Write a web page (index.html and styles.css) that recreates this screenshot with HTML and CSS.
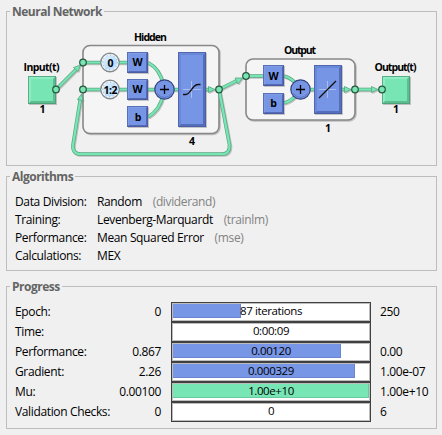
FILE: index.html
```html
<!DOCTYPE html>
<html lang="en">
<head>
<meta charset="utf-8">
<title>Neural Network Training</title>
<link rel="stylesheet" href="styles.css">
</head>
<body>
<main class="window">
  <section class="panel network">
    <h2 class="panel-title"><span class="title-text">Neural Network</span></h2>
    <svg class="diagram" viewBox="7 12 429 153" width="429" height="153">
      <defs>
        <linearGradient id="delay" x1="0" y1="0" x2="1" y2="1">
          <stop offset="0" stop-color="#fff"/><stop offset=".3" stop-color="#d4eaff"/><stop offset=".65" stop-color="#b4dcff"/><stop offset="1" stop-color="#f4faff"/>
        </linearGradient>
        <filter id="shadow" x="-10%" y="-10%" width="125%" height="125%">
          <feDropShadow dx="1" dy="1" stdDeviation=".7" flood-color="#777" flood-opacity=".4"/>
        </filter>
        <symbol id="block" viewBox="0 0 21 21" overflow="visible">
          <rect width="21" height="21" fill="#7695e5"/>
          <path d="M0 0H21L19 2H2V19L0 21Z" fill="#819ce4"/>
          <path d="M21 0V21H0L2 19H19V2Z" fill="#5269b5"/>
          <rect x=".5" y=".5" width="20" height="20" fill="none" stroke="#43579b" stroke-opacity=".65"/>
        </symbol>
        <symbol id="port" viewBox="-5 -5 10 10" overflow="visible">
          <circle r="3.3" fill="#78e6b4" stroke="#28583f" stroke-width="1.2"/>
        </symbol>
        <symbol id="sum" viewBox="-11 -11 22 22" overflow="visible">
          <circle r="9.7" fill="#7695e5" stroke="#33447f" stroke-width="1.2"/>
          <path d="M-7 4A8.3 8.3 0 0 0 7 4" fill="none" stroke="#5c75c4"/>
          <path d="M-4.5 0H4.5M0 -4.5V4.5" stroke="#000" stroke-width="1.3"/>
        </symbol>
        <symbol id="clock" viewBox="-11 -11 22 22" overflow="visible">
          <circle r="9.2" fill="url(#delay)" stroke="#858a8d" stroke-width="1.4"/>
          <circle r="7.8" fill="none" stroke="#eef2f5" stroke-width="1.2"/>
          <circle r="7.3" fill="none" stroke="#7e99ad" stroke-width="1" stroke-dasharray=".8 3.02"/>
        </symbol>
        <symbol id="io" viewBox="0 0 28 28" overflow="visible">
          <rect width="28" height="28" fill="#78e6b4"/>
          <path d="M0 0H28L25 3H3V25L0 28Z" fill="#8eecc1"/>
          <path d="M28 0V28H0L3 25H25V3Z" fill="#5bbd90"/>
          <rect x=".5" y=".5" width="27" height="27" fill="none" stroke="#4b9875" stroke-opacity=".75"/>
        </symbol>
      </defs>

      <g class="frame" filter="url(#shadow)">
        <rect x="83" y="45.5" width="136" height="88" rx="7"/>
        <rect x="246" y="59" width="109" height="61" rx="7"/>
      </g>

      <g filter="url(#shadow)">
        <g class="wire-edge">
          <path d="M56 89.5L77 68.5"/>
          <path d="M219 89.5L229.5 145Q230 154 222 154H81Q72 154 73 145L80.5 98"/>
          <path d="M219 89.5L237 80.5"/><path d="M355 89.5H373"/>
          <path d="M83 62.5H137M83 89.5H180M205 89.5H211M148 62.5Q160 69 163 84M148 117Q160 110 163 95"/>
          <path d="M246 76H264M284 76Q292 78 298 86M284 103Q292 101 298 93M300 89.5H314M342 89.5H347"/>
        </g>
        <g class="wire">
          <path d="M56 89.5L77 68.5"/>
          <path d="M219 89.5L229.5 145Q230 154 222 154H81Q72 154 73 145L80.5 98"/>
          <path d="M219 89.5L237 80.5"/><path d="M355 89.5H373"/>
          <path d="M83 62.5H137M83 89.5H180M205 89.5H211M148 62.5Q160 69 163 84M148 117Q160 110 163 95"/>
          <path d="M246 76H264M284 76Q292 78 298 86M284 103Q292 101 298 93M300 89.5H314M342 89.5H347"/>
        </g>
        <g class="arrow">
          <path d="M80.5 65L78 71.5L73.500 67.500Z"/>
          <path d="M81.5 94L83 100.5L77.500 99.500Z"/>
          <path d="M208.500 86.5V92.5L215 89.5Z"/>
          <path d="M235 78L238 84L242.5 78Z"/>
          <path d="M344.500 86.5V92.5L351 89.5Z"/>
          <path d="M371.500 86.5V92.5L378 89.5Z"/>
        </g>
      </g>

      <g filter="url(#shadow)">
        <use href="#io" x="28" y="76" width="28" height="28"/>
        <use href="#io" x="382" y="76" width="28" height="28"/>
        <use href="#block" x="127" y="52" width="21" height="21"/>
        <use href="#block" x="127" y="79" width="21" height="21"/>
        <use href="#block" x="127" y="106" width="21" height="21"/>
        <use href="#block" x="263" y="65" width="21" height="21"/>
        <use href="#block" x="263" y="93" width="21" height="21"/>
        <rect x="178" y="52" width="28" height="75" fill="#7695e5"/>
        <path d="M178 52H206L203 55H181V124L178 127Z" fill="#6b88da"/>
        <path d="M206 52V127H178L181 124H203V55Z" fill="#556ebc"/>
        <rect x="178.500" y="52.500" width="27" height="74" fill="none" stroke="#43579b" stroke-opacity=".65"/>
        <rect x="314" y="65" width="28" height="49" fill="#7695e5"/>
        <path d="M314 65H342L339 68H317V111L314 114Z" fill="#6b88da"/>
        <path d="M342 65V114H314L317 111H339V68Z" fill="#556ebc"/>
        <rect x="314.500" y="65.500" width="27" height="48" fill="none" stroke="#43579b" stroke-opacity=".65"/>
      </g>
      <use href="#clock" x="99" y="51.500" width="22" height="22"/>
      <use href="#clock" x="99" y="78.500" width="22" height="22"/>
      <use href="#sum" x="153.500" y="78.500" width="22" height="22"/>
      <use href="#sum" x="289.500" y="78.500" width="22" height="22"/>
      <path class="axes" d="M183 89.500H201M191.500 81V98M319 89.500H336M327.500 81V98"/>
      <path class="curve" d="M183 94.500H186Q188 94.500 190 91.500L194 86.500Q196 84.500 198 84.500H200.500M319 98L336 81"/>
      <use href="#port" x="51" y="84.500" width="10" height="10"/>
      <use href="#port" x="78" y="57.500" width="10" height="10"/>
      <use href="#port" x="78" y="84.500" width="10" height="10"/>
      <use href="#port" x="214" y="84.500" width="10" height="10"/>
      <use href="#port" x="241" y="71" width="10" height="10"/>
      <use href="#port" x="350" y="84.500" width="10" height="10"/>
      <use href="#port" x="377" y="84.500" width="10" height="10"/>

      <g class="label">
        <text x="150.500" y="41" textLength="33">Hidden</text>
        <text x="300" y="54" textLength="32">Output</text>
        <text x="41.500" y="71" textLength="36">Input(t)</text>
        <text x="395.500" y="71" textLength="42">Output(t)</text>
        <text x="42.500" y="113">1</text>
        <text x="396" y="113">1</text>
        <text x="192" y="145">4</text>
        <text x="328" y="132">1</text>
        <text x="110.500" y="66.500">0</text>
        <text x="110.500" y="94" textLength="14">1:2</text>
        <text x="137.500" y="66">W</text>
        <text x="137.500" y="93">W</text>
        <text x="138" y="121">b</text>
        <text x="273.500" y="80">W</text>
        <text x="273.500" y="107">b</text>
      </g>
    </svg>
  </section>

  <section class="panel algorithms">
    <h2 class="panel-title"><span class="title-text">Algorithms</span></h2>
    <dl class="facts">
      <dt>Data Division:</dt><dd>Random <span class="fn">(dividerand)</span></dd>
      <dt>Training:</dt><dd>Levenberg-Marquardt <span class="fn">(trainlm)</span></dd>
      <dt>Performance:</dt><dd>Mean Squared Error <span class="fn">(mse)</span></dd>
      <dt>Calculations:</dt><dd>MEX</dd>
    </dl>
  </section>

  <section class="panel progress">
    <h2 class="panel-title"><span class="title-text">Progress</span></h2>
    <div class="rows">
      <div class="row"><span>Epoch:</span><span class="start">0</span><div class="bar"><div class="fill blue" style="width:68px"></div><span class="value">87 iterations</span></div><span class="end">250</span></div>
      <div class="row"><span>Time:</span><span class="start"></span><div class="bar"><span class="value">0:00:09</span></div><span class="end"></span></div>
      <div class="row"><span>Performance:</span><span class="start">0.867</span><div class="bar"><div class="fill blue" style="width:168px"></div><span class="value">0.00120</span></div><span class="end">0.00</span></div>
      <div class="row"><span>Gradient:</span><span class="start">2.26</span><div class="bar"><div class="fill blue" style="width:182px"></div><span class="value">0.000329</span></div><span class="end">1.00e-07</span></div>
      <div class="row"><span>Mu:</span><span class="start">0.00100</span><div class="bar"><div class="fill green" style="width:196px"></div><span class="value">1.00e+10</span></div><span class="end">1.00e+10</span></div>
      <div class="row"><span>Validation Checks:</span><span class="start">0</span><div class="bar"><span class="value">0</span></div><span class="end">6</span></div>
    </div>
  </section>
</main>
</body>
</html>
```
FILE: styles.css
```css
* { box-sizing: border-box; }
body {
  margin: 0;
  background: #f0f0f0;
  color: #000;
  font: 12px/18px "Open Sans", "Noto Sans", sans-serif;
  letter-spacing: -0.36px;
  white-space: nowrap;
}
.window {
  width: 442px;
  height: 435px;
  padding: 11px 5px 0 6px;
  display: flex;
  flex-direction: column;
}
.panel { border: 1px solid #bdbdbd; }
.network { height: 155px; }
.algorithms { height: 95px; margin-top: 10px; }
.progress { height: 143px; margin-top: 15px; }
.panel-title {
  margin: -9px 0 0 3px;
  height: 18px;
  font-size: 12px;
  line-height: 18px;
  color: #646464;
  display: flex;
}
.title-text {
  padding: 0 2px;
  background: #f0f0f0;
  letter-spacing: -0.5px;
}
.diagram { display: block; margin-top: -9px; }

.frame { fill: #f5f5f5; stroke: #888; stroke-width: 1.6; }
.wire, .wire-edge { fill: none; }
.wire-edge { stroke: #58a681; stroke-width: 3.6; }
.wire { stroke: #78e6b4; stroke-width: 2.2; }
.arrow { fill: #78e6b4; stroke: #58a681; stroke-width: .8; }
.axes { fill: none; stroke: #a9bdf0; stroke-width: 1; }
.curve { fill: none; stroke: #111; stroke-width: 1.3; }
.label {
  font: 700 10.5px "Open Sans", "Noto Sans", sans-serif;
  letter-spacing: 0;
  text-anchor: middle;
}

.facts {
  margin: 7px 0 0 8px;
  display: grid;
  grid-template-columns: 82px 1fr;
  grid-auto-rows: 18px;
}
.facts dd { margin: 0; }
.fn { margin-left: 8px; color: #828282; }

.rows {
  margin: 6px 0 0 8px;
  display: grid;
  gap: 2px;
}
.row {
  display: grid;
  grid-template-columns: 82px 64px 10px 200px 10px 1fr;
  height: 18px;
  line-height: 20px;
}
.start { text-align: right; }
.bar {
  grid-column: 4;
  display: grid;
  border: 1px solid #404040;
  box-shadow: inset 0 0 0 1px #bdbdbd;
  background: #fff;
  padding: 1px;
}
.end { grid-column: 6; margin-left: -1px; }
.fill, .value { grid-area: 1 / 1; }
.fill { height: 14px; }
.blue { background: #7796e6; box-shadow: inset -1px -1px 0 #6985d0; }
.green { background: #78e6b4; box-shadow: inset -1px -1px 0 #66ca9e; }
.value {
  text-align: center;
  font-size: 11.5px;
  line-height: 14px;
  letter-spacing: -0.4px;
}
```
